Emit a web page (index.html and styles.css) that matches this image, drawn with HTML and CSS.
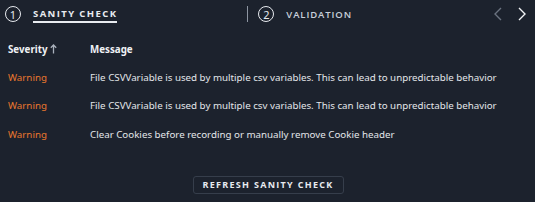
FILE: index.html
```html
<!DOCTYPE html>
<html>
<head>
<meta charset="utf-8">
<link rel="stylesheet" href="styles.css">
</head>
<body>
<div class="panel">
  <div class="steps">
    <div class="step active">
      <span class="num">1</span>
      <span class="label">SANITY CHECK</span>
    </div>
    <div class="divider"></div>
    <div class="step">
      <span class="num">2</span>
      <span class="label">VALIDATION</span>
    </div>
    <div class="nav">
      <svg class="chev dim" width="10" height="14" viewBox="0 0 10 14"><path d="M8 1 L2 7 L8 13" fill="none" stroke="currentColor" stroke-width="1.4"/></svg>
      <svg class="chev" width="10" height="14" viewBox="0 0 10 14"><path d="M2 1 L8 7 L2 13" fill="none" stroke="currentColor" stroke-width="1.4"/></svg>
    </div>
  </div>
  <div class="table">
    <div class="row head">
      <div class="c1">Severity <svg class="arrow" width="7" height="10" viewBox="0 0 7 10"><path d="M3.5 1 V9.5 M0.8 3.8 L3.5 1 L6.2 3.8" fill="none" stroke="currentColor" stroke-width="1.3"/></svg></div>
      <div class="c2">Message</div>
    </div>
    <div class="row">
      <div class="c1 warn">Warning</div>
      <div class="c2">File CSVVariable is used by multiple csv variables. This can lead to unpredictable behavior</div>
    </div>
    <div class="row">
      <div class="c1 warn">Warning</div>
      <div class="c2">File CSVVariable is used by multiple csv variables. This can lead to unpredictable behavior</div>
    </div>
    <div class="row">
      <div class="c1 warn">Warning</div>
      <div class="c2">Clear Cookies before recording or manually remove Cookie header</div>
    </div>
  </div>
  <div class="actions">
    <button class="btn">REFRESH SANITY CHECK</button>
  </div>
</div>
</body>
</html>
```
FILE: styles.css
```css
html, body {
  margin: 0;
  padding: 0;
  background: #1c222d;
}
body {
  width: 535px;
  height: 202px;
  overflow: hidden;
  font-family: "Noto Sans", "Open Sans", sans-serif;
  color: #e3e6ea;
}
.panel {
  display: flex;
  flex-direction: column;
}
.steps {
  display: flex;
  align-items: center;
  height: 28px;
  padding: 0 0 0 5px;
}
.step {
  display: flex;
  align-items: center;
  gap: 12px;
}
.num {
  width: 14px;
  height: 14px;
  border: 1.3px solid #e6e9ee;
  border-radius: 50%;
  display: flex;
  align-items: center;
  justify-content: center;
  font-size: 11px;
  line-height: 1;
  color: #e6e9ee;
  box-sizing: content-box;
}
.label {
  font-family: "Open Sans", sans-serif;
  font-weight: 600;
  font-size: 9.5px;
  letter-spacing: 0.9px;
  color: #c9d0da;
}
.step.active .label {
  font-weight: 700;
  letter-spacing: 1.4px;
  color: #e8ebf0;
  padding-top: 2px;
  border-bottom: 2px solid #e8ebf0;
  padding-bottom: 1px;
}
.divider {
  width: 1px;
  height: 16px;
  background: #8d95a1;
  margin: 0 10px 0 130px;
}
.nav {
  margin-left: auto;
  display: flex;
  gap: 14px;
  padding-right: 8px;
  align-items: center;
}
.chev { color: #f2f4f7; display: block; }
.chev.dim { color: #6b7380; }
.table {
  display: flex;
  flex-direction: column;
  margin-top: 7px;
}
.row {
  display: flex;
  align-items: center;
  height: 28.5px;
  font-size: 9.75px;
  padding-left: 8px;
}
.row.head {
  height: 28px;
  font-weight: 700;
  color: #f0f2f5;
}
.c1 { width: 82px; flex: none; display: flex; align-items: center; gap: 3px; }
.c2 { white-space: nowrap; }
.warn { color: #e8772e; }
.arrow { color: #aab1bc; display: block; }
.actions {
  display: flex;
  justify-content: center;
  margin-top: 27px;
  padding-left: 1px;
}
.btn {
  background: transparent;
  border: 1px solid #363e4b;
  border-radius: 3px;
  color: #e8ebf0;
  font-family: "Open Sans", sans-serif;
  font-weight: 700;
  font-size: 9px;
  letter-spacing: 1.3px;
  height: 18px;
  width: 151px;
  padding: 0;
}
```
